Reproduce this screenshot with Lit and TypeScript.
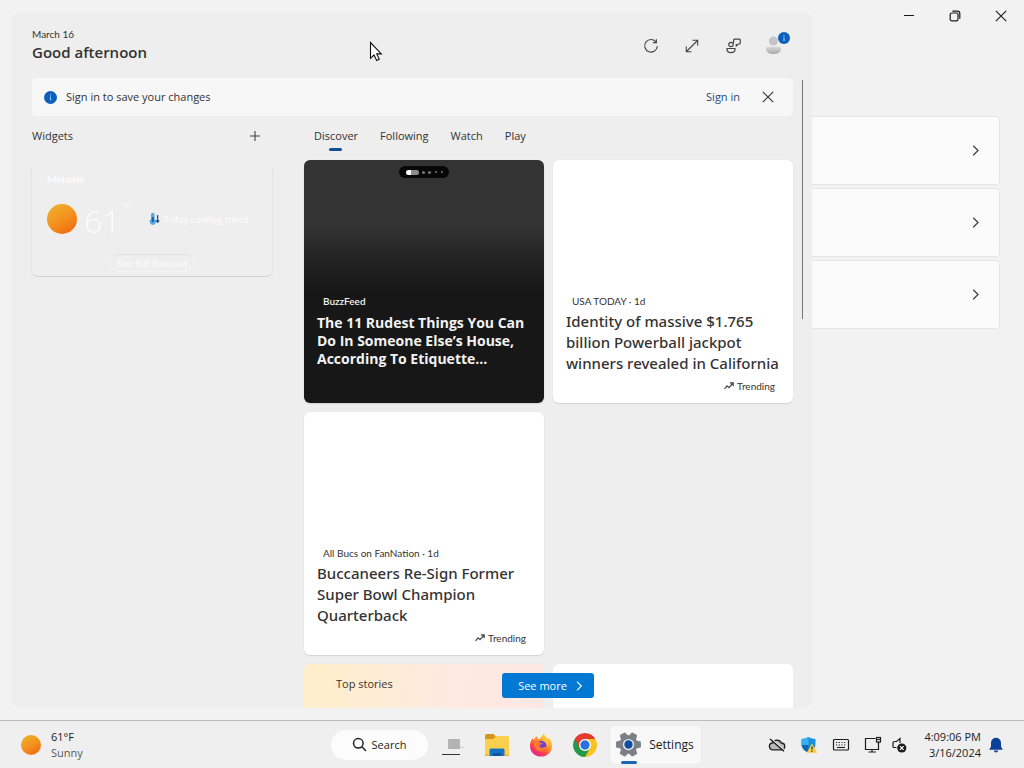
import { LitElement, html, css, svg, nothing } from "lit";
import { customElement, property } from "lit/decorators.js";

const base = css`
  * { box-sizing: border-box; margin: 0; }
  button, a { font: inherit; color: inherit; }
  button { border: 0; padding: 0; background: none; display: inline-flex; align-items: center; justify-content: center; }
  a { text-decoration: none; }
  svg { display: block; flex: none; }
  .small { font-family: Lato, "Open Sans", sans-serif; font-size: 10px; line-height: 16px; }
`;

const chevron = (size: number) => html`<svg width=${size} height=${size} viewBox="0 0 12 12" fill="none" stroke="currentColor" stroke-width="1.3"><path d="M3.5 0.8 8.8 6 3.5 11.2" /></svg>`;

const cross = (size: number) => html`<svg width=${size} height=${size} viewBox="0 0 12 12" fill="none" stroke="currentColor" stroke-width="1.1"><path d="M0.8 0.8 11.2 11.2M11.2 0.8 0.8 11.2" /></svg>`;

const sun = (size: number, id: string) => html`<svg width=${size} height=${size} viewBox="0 0 20 20">
  <defs><linearGradient id=${id} x1="0.2" y1="0" x2="0.8" y2="1"><stop offset="0" stop-color="#ecb02c" /><stop offset="0.5" stop-color="#f5921e" /><stop offset="1" stop-color="#ee6a10" /></linearGradient></defs>
  <circle cx="10" cy="10" r="10" fill="url(#${id})" /></svg>`;

const info = (size: number) => html`<svg width=${size} height=${size} viewBox="0 0 13 13"><circle cx="6.5" cy="6.5" r="6.5" fill="#0c5fbd" /><path d="M6.5 5.6V9.6M6.5 3.2V4.5" stroke="#9cc8f2" stroke-width="1.1" /></svg>`;

@customElement("settings-window")
class SettingsWindow extends LitElement {
  static styles = [base, css`
    :host { display: block; }
    .bar { display: flex; justify-content: flex-end; height: 32px; }
    .bar button { width: 46px; color: #1a1a1a; }
    .list { display: flex; flex-direction: column; gap: 3px; padding: 84px 24px 0 40px; }
    .row { height: 69px; border: 1px solid #e5e5e5; border-radius: 4px; background: #fbfbfb; justify-content: flex-end; padding-right: 18px; color: #3a3a3a; }
  `];
  render() {
    return html`
      <div class="bar">
        <button aria-label="Minimize"><svg width="12" height="12" viewBox="0 0 12 12"><path d="M1 5.5H11" stroke="currentColor" stroke-width="1" /></svg></button>
        <button aria-label="Restore"><svg width="12" height="12" viewBox="0 0 12 12" fill="none" stroke="currentColor" stroke-width="1.2"><rect x="1.2" y="3" width="7.8" height="7.8" rx="1.6" /><path d="M3.4 1.2H8.4Q10.8 1.2 10.8 3.6V8.8" /></svg></button>
        <button aria-label="Close">${cross(12)}</button>
      </div>
      <div class="list">
        ${["Open first setting", "Open second setting", "Open third setting"].map((l) => html`<button class="row" aria-label=${l}>${chevron(11)}</button>`)}
      </div>`;
  }
}

@customElement("weather-card")
class WeatherCard extends LitElement {
  static styles = [base, css`
    :host { display: block; color: #fcfcfc; }
    .card { height: 112px; padding: 6px 14px 4px 15px; border-radius: 6px; border-bottom: 1px solid #d2d2d2;
      box-shadow: 1px 0 0 #e4e4e4, -1px 0 0 #e4e4e4; display: flex; flex-direction: column; }
    .place { font-weight: 700; }
    .now { flex: 1; display: flex; align-items: center; padding-bottom: 4px; }
    .temp { font: 300 32px/40px "Open Sans", sans-serif; margin-left: 7px; padding-top: 4px; }
    .unit { font-size: 8px; line-height: 10px; align-self: flex-start; padding-top: 14px; margin: 0 19px 0 2px; }
    .trend { display: flex; align-items: center; gap: 3px; white-space: nowrap; }
    .more { align-self: center; height: 18px; padding: 0 6px; border-radius: 9px; border: 1px solid #f4f4f4; border-top-color: #e2e2e2; }
  `];
  render() {
    return html`<article class="card">
      <div class="place small">Metairie</div>
      <div class="now">
        ${sun(30, "sunCard")}
        <span class="temp">61</span><span class="unit">°F</span>
        <span class="trend small"><svg width="11" height="13" viewBox="0 0 11 13"><path d="M2 2.5a1.8 1.8 0 0 1 3.6 0V7.3a3 3 0 1 1-3.6 0Z" fill="#59a9e4" /><path d="M3.8 5V10" stroke="#185fae" stroke-width="2" /><path d="M8.6 3V10M7 8.3 8.6 10.3 10.2 8.3" stroke="#1f4f93" stroke-width="1.3" fill="none" /></svg>7-day cooling trend</span>
      </div>
      <button class="more small">See full forecast</button>
    </article>`;
  }
}

@customElement("news-card")
class NewsCard extends LitElement {
  @property() source = "";
  @property() headline = "";
  @property({ type: Boolean }) dark = false;
  @property({ type: Boolean }) trending = false;
  static styles = [base, css`
    :host { display: block; }
    .card { height: 100%; border-radius: 6px; background: #fff; color: #333; padding: 0 8px 9px 13px; display: flex; flex-direction: column;
      box-shadow: 0 1px 1px #d4d4d4, 0 0 1px #dcdcdc; position: relative; }
    .picture { height: 133px; flex: none; }
    .source { padding-left: 6px; margin-bottom: 2px; }
    .title { font-family: "Noto Sans", "Open Sans", sans-serif; font-size: 15px; line-height: 21px; font-weight: 500; }
    .tag { margin-top: auto; display: flex; justify-content: flex-end; align-items: center; gap: 3px; padding-right: 10px; }
    .dark { color: #f2f2f2; background: linear-gradient(#333 0, #333 28%, #262626 38%, #171717 54%, #171717 100%); }
    .dark .source { font-weight: 600; margin-bottom: 5px; }
    .dark .title { font-family: "Open Sans", sans-serif; font-size: 14px; line-height: 18px; font-weight: 700; }
    .dots { position: absolute; top: 6px; left: 50%; transform: translateX(-50%); width: 50px; height: 12px; border-radius: 6px; background: #070707;
      display: flex; align-items: center; justify-content: center; gap: 3px; }
    .dots i { width: 3px; height: 3px; border-radius: 2px; background: #777; }
    .dots i.far { width: 2px; height: 2px; margin-left: 1px; }
    .dots i.on { width: 13px; height: 5px; border-radius: 3px; background: linear-gradient(90deg, #fff 35%, #8c8c8c 35%); }
  `];
  render() {
    return html`<article class="card ${this.dark ? "dark" : ""}">
      ${this.dark ? html`<div class="dots"><i class="on"></i><i></i><i></i><i class="far"></i><i class="far"></i></div>` : nothing}
      <div class="picture"></div>
      <div class="source small">${this.source}</div>
      <h3 class="title">${this.headline}</h3>
      ${this.trending ? html`<div class="tag small"><svg width="10" height="10" viewBox="0 0 10 10" fill="none" stroke="#444" stroke-width="1.2"><path d="M0.5 8 3 4.8 5 6.6 9 2M5.8 1.8H9.2V5.2" /></svg>Trending</div>` : nothing}
    </article>`;
  }
}

@customElement("widgets-panel")
class WidgetsPanel extends LitElement {
  static styles = [base, css`
    :host { display: flex; flex-direction: column; background: #eeeeee; border-radius: 6px; overflow: hidden; color: #333; font-size: 11px; line-height: 16px; }
    header { display: flex; justify-content: space-between; padding: 14px 22px 12px 20px; flex: none; }
    h1 { font-size: 15px; line-height: 20px; font-weight: 600; }
    .tools { display: flex; gap: 9px; align-items: center; height: 40px; }
    .tools button { width: 32px; height: 32px; color: #444; }
    .body { flex: 1; min-height: 0; display: flex; }
    .content { flex: 1; min-width: 0; padding: 0 9px 0 20px; overflow: hidden; }
    .thumb { width: 1px; height: 239px; margin: 2px 9px 0 0; background: #757575; }
    .banner { display: flex; align-items: center; height: 38px; border-radius: 5px; background: #f7f7f7; padding: 0 17px 0 12px; }
    .banner p { flex: 1; margin-left: 9px; }
    .banner a { color: #1e4a7c; margin-right: 20px; }
    .banner button { width: 16px; height: 24px; }
    .columns { display: grid; grid-template-columns: 240px minmax(0, 1fr); gap: 32px; }
    .widgets-head { display: flex; justify-content: space-between; align-items: center; height: 40px; padding-right: 11px; margin-bottom: 9px; }
    h2 { font-size: 11px; font-weight: 400; }
    .tabs { display: flex; gap: 22px; height: 44px; padding-left: 10px; }
    .tabs button { position: relative; height: 40px; }
    .tabs button.active::after { content: ""; position: absolute; left: 50%; bottom: 5px; width: 13px; height: 3px; margin-left: -7px; border-radius: 2px; background: #0f5199; }
    .feed { display: grid; grid-template-columns: 1fr 1fr; grid-auto-rows: 243px; gap: 9px; }
    .feed .lead { grid-column: 1; }
    .top { grid-column: 1; border-radius: 6px; background: linear-gradient(100deg, #feefc9, #fdeadf 50%, #fde6e6); padding: 12px 32px; color: #3c3129; }
    .blank { border-radius: 6px; background: #fff; }
    .see { position: absolute; left: 50%; bottom: 10px; margin-left: 90px; width: 92px; height: 25px; border-radius: 3px; background: #0078d4; color: #fff; gap: 7px; padding-left: 6px; }
  `];
  render() {
    return html`
      <header>
        <div><div class="small">March 16</div><h1>Good afternoon</h1></div>
        <div class="tools">
          <button aria-label="Refresh"><svg width="16" height="16" viewBox="0 0 16 16" fill="none" stroke="currentColor" stroke-width="1.1"><path d="M13.3 4.4A6.3 6.3 0 1 0 14.3 8M13.4 1.2V4.6H10" /></svg></button>
          <button aria-label="Expand"><svg width="16" height="16" viewBox="0 0 16 16" fill="none" stroke="currentColor" stroke-width="1.1"><path d="M2.5 13.5 13.5 2.5M8.5 2.3H13.7V7.5M2.3 8.5V13.7H7.5" /></svg></button>
          <button aria-label="Feedback"><svg width="18" height="16" viewBox="0 0 18 16" fill="none" stroke="currentColor" stroke-width="1.2"><circle cx="7" cy="6.5" r="2.2" /><path d="M3 10.5H11V11.5Q11 14.6 7 14.6T3 11.5ZM9.6 5V2.2Q9.6 1.2 10.6 1.2H15.3Q16.3 1.2 16.3 2.2V5Q16.3 6 15.3 6H14.3L12.3 7.8V6" /></svg></button>
          <button aria-label="Account"><svg width="32" height="32" viewBox="0 0 32 32"><defs><linearGradient id="person" x1="0" y1="0" x2="0" y2="1"><stop offset="0" stop-color="#d9d9d9" /><stop offset="1" stop-color="#a9a9a9" /></linearGradient></defs><circle cx="15.5" cy="11" r="4.5" fill="#c4c6c6" /><path d="M8 18.5Q8 16.8 9.8 16.8H21.2Q23 16.8 23 18.5Q23 24 15.5 24T8 18.5Z" fill="url(#person)" /><circle cx="26" cy="8" r="6" fill="#0c5fbd" /><path d="M26 7.2V11M26 5V6.2" stroke="#9cc8f2" stroke-width="1.2" /></svg></button>
        </div>
      </header>
      <div class="body">
        <div class="content">
          <div class="banner">${info(13)}<p>Sign in to save your changes</p><a href="#signin">Sign in</a><button aria-label="Dismiss">${cross(12)}</button></div>
          <div class="columns">
            <section>
              <div class="widgets-head"><h2>Widgets</h2><button aria-label="Add widgets"><svg width="12" height="12" viewBox="0 0 12 12"><path d="M6 1V11M1 6H11" stroke="#444" stroke-width="1.1" /></svg></button></div>
              <weather-card></weather-card>
            </section>
            <section>
              <nav class="tabs"><button class="active">Discover</button><button>Following</button><button>Watch</button><button>Play</button></nav>
              <div class="feed">
                <news-card dark source="BuzzFeed" headline="The 11 Rudest Things You Can Do In Someone Else’s House, According To Etiquette..."></news-card>
                <news-card trending source="USA TODAY · 1d" headline="Identity of massive $1.765 billion Powerball jackpot winners revealed in California"></news-card>
                <news-card class="lead" trending source="All Bucs on FanNation · 1d" headline="Buccaneers Re-Sign Former Super Bowl Champion Quarterback"></news-card>
                <div class="top">Top stories</div>
                <div class="blank"></div>
              </div>
            </section>
          </div>
        </div>
        <div class="thumb"></div>
      </div>
      <button class="see">See more ${chevron(10)}</button>`;
  }
}

const gear = () => {
  const teeth = [0, 60, 120, 180, 240, 300];
  return html`<svg width="25" height="25" viewBox="0 0 24 24">${teeth.map((a) => svg`<path d="M8.6 4.5 9.6 0.6H14.4L15.4 4.5Z" fill="#7b8086" stroke="#7b8086" stroke-linejoin="round" transform="rotate(${a + 30} 12 12)" />`)}
    <circle cx="12" cy="12" r="8.8" fill="#7b8086" /><circle cx="12" cy="12" r="5.4" fill="#e4e9ee" /><circle cx="12" cy="12" r="4" fill="#0d4f9e" /></svg>`;
};

@customElement("task-bar")
class TaskBar extends LitElement {
  static styles = [base, css`
    :host { display: grid; grid-template-columns: 1fr auto 1fr; align-items: center; height: 48px; padding: 0 14px 0 21px; background: #efefef; border-top: 1px solid #bcbcbc; color: #1c1c1c; font-size: 11px; line-height: 16px; }
    .weather { display: inline-flex; align-items: center; gap: 10px; text-align: left; justify-self: start; }
    .weather small { font-size: 11px; color: #5a5a5a; display: block; }
    .apps { display: flex; align-items: center; }
    .apps button { width: 44px; height: 38px; }
    .apps .search { width: 97px; height: 30px; border-radius: 15px; background: #fcfcfc; gap: 5px; margin-right: 3px; font-size: 11px; }
    .apps .settings { width: 91px; border-radius: 4px; background: #f8f8f8; box-shadow: 0 0 1px #cfcfcf; gap: 8px; margin-left: 3px; position: relative; font-size: 12px; }
    .settings::after { content: ""; position: absolute; left: 11px; bottom: 0; width: 16px; height: 3px; border-radius: 2px; background: #1a66b8; }
    .tray { display: flex; align-items: center; justify-content: flex-end; }
    .tray button { width: 32px; height: 38px; }
    .tray .sound { width: 20px; }
    .tray .bell { width: 28px; }
    .tray .clock { width: 72px; justify-content: flex-end; text-align: right; margin-right: 1px; white-space: nowrap; }
  `];
  render() {
    return html`
      <button class="weather">${sun(20, "sunBar")}<span>61°F<small>Sunny</small></span></button>
      <div class="apps">
        <button class="search"><svg width="15" height="15" viewBox="0 0 15 15" fill="none" stroke="#222" stroke-width="1.5"><circle cx="6.3" cy="6.3" r="4.8" /><path d="M9.8 9.8 14 14" /></svg>Search</button>
        <button aria-label="Task view"><svg width="24" height="24" viewBox="0 0 24 24"><path d="M17 14.5H23" stroke="#d4d4d4" /><rect x="7" y="6" width="12" height="10" rx="1" fill="#b3b3b3" /><path d="M1 21.5H19" stroke="#333" /></svg></button>
        <button aria-label="File Explorer"><svg width="26" height="26" viewBox="0 0 26 26"><path d="M1 4Q1 2 3 2H9.5L12 4.5V7H1Z" fill="#d6961a" /><path d="M1 7H9.5L12 4H23.5Q25 4 25 5.5V22.5Q25 24 23.5 24H2.5Q1 24 1 22.5Z" fill="#fbd04d" /><path d="M5.500 24V18Q5.500 16.500 7 16.500H19Q20.500 16.500 20.500 18V24Z" fill="#1673c5" /><path d="M9 24V21H17V24Z" fill="#0f559f" /><path d="M1 23.3H5.5M20.5 23.3H25" stroke="#e2a72e" /></svg></button>
        <button aria-label="Firefox"><svg width="24" height="24" viewBox="0 0 24 24"><defs><linearGradient id="fox" x1="0.85" y1="0.1" x2="0.25" y2="0.95"><stop offset="0" stop-color="#ffe04a" /><stop offset="0.45" stop-color="#ff8b2a" /><stop offset="0.75" stop-color="#fb3d4f" /><stop offset="1" stop-color="#e2258f" /></linearGradient></defs><path d="M12 23.5C5.5 23.5 1 18.8 1 12.9C1 9.6 2.3 7 4 4.7C4 6 4.3 6.8 4.9 7.3C5.6 5.4 6.6 4 8 3C7.9 4.7 8.9 5.6 10 6.2C11.7 5.5 12.4 2.7 15 0.5C15.5 3 17.6 4.2 19.3 6.2C19.7 5.7 19.6 5 19.5 4.3C22 6.5 23 9.8 23 12.9C23 18.8 18.5 23.5 12 23.5Z" fill="url(#fox)" /><circle cx="12.3" cy="13" r="5.3" fill="#7440cf" /><path d="M4.9 9C7.5 7.5 9.5 8.3 10.8 9.8H13.3C12.8 11.6 10.7 11.5 10.2 12.7C10.3 14.6 13.8 16 17.5 13C17 17.5 13.5 19 10.5 18.3C6.5 17.4 4.5 13 4.9 9Z" fill="#ff7a2b" /><path d="M14 7.5C18 9 18.6 13 17.5 15.5C20.5 12 18.5 7 14 4.5Z" fill="#ffc638" /></svg></button>
        <button aria-label="Chrome"><svg width="24" height="24" viewBox="0 0 24 24"><circle cx="12" cy="12" r="12" fill="#fff" /><path d="M12 12 1.61 6A12 12 0 0 1 22.39 6Z" fill="#e33b2e" /><path d="M12 12 22.39 6A12 12 0 0 1 12 24Z" fill="#fcc31e" /><path d="M12 12 12 24A12 12 0 0 1 1.61 6Z" fill="#279847" /><path d="M12 6H22.39L17.2 15Z" fill="#fcc31e" /><path d="M17.2 15 12 24 6.8 15Z" fill="#279847" /><path d="M6.8 15 1.61 6 12 6Z" fill="#e33b2e" /><path d="M1.61 6 6.8 15 4 13Z" fill="#279847" /><circle cx="12" cy="12" r="6" fill="#fff" /><circle cx="12" cy="12" r="4.7" fill="#2c70de" /></svg></button>
        <button class="settings">${gear()}Settings</button>
      </div>
      <div class="tray">
        <button aria-label="OneDrive"><svg width="18" height="16" viewBox="0 0 18 16"><path d="M5 12.8A3.4 3.4 0 0 1 4.6 6A4.7 4.7 0 0 1 13.3 6A3.4 3.4 0 0 1 13.4 12.8Z" fill="#b9b9b9" stroke="#1c1c1c" stroke-width="1.3" /><path d="M2.8 1.2 16.8 13.5" stroke="#efefef" stroke-width="1.4" /><path d="M2 2 16 14.3" stroke="#1c1c1c" stroke-width="1.4" /></svg></button>
        <button aria-label="Windows Security"><svg width="18" height="18" viewBox="0 0 18 18"><path d="M8.5 1Q11.5 3 15.5 3V8Q15.5 14 8.5 16.5Q1.5 14 1.5 8V3Q5.5 3 8.5 1Z" fill="#1c8fdc" /><path d="M8.5 1V9H1.5V3Q5.5 3 8.5 1Z" fill="#37b0f1" /><path d="M8.5 9V16.5Q2.5 14.3 1.6 9Z" fill="#1266ad" /><path d="M12 7.5 17.3 16.8H6.7Z" fill="#fbcb45" /><path d="M12 10.5V13.6M12 14.5V15.7" stroke="#222" stroke-width="1.2" /></svg></button>
        <button aria-label="Touch keyboard"><svg width="18" height="14" viewBox="0 0 18 14"><rect x="1.5" y="1.5" width="15" height="10.5" rx="1" fill="none" stroke="#1c1c1c" stroke-width="1.2" /><path d="M4 4.5H14.5M4 7H14.5" stroke="#1c1c1c" stroke-width="1.2" stroke-dasharray="1.2 1.5" /><path d="M5 9.5H13" stroke="#1c1c1c" stroke-width="1.1" /></svg></button>
        <button aria-label="Network"><svg width="18" height="18" viewBox="0 0 18 18" fill="none" stroke="#1c1c1c" stroke-width="1.2"><path d="M11.5 2.5H1.5V13.5H14.5V7M8 13.5V16M4.5 16H12" /><rect x="12.5" y="1.5" width="4" height="4.5" /><path d="M12.5 3.5H16.5M14.5 6V8" /></svg></button>
        <button class="sound" aria-label="Volume"><svg width="16" height="16" viewBox="0 0 16 16"><path d="M9 6V1.5L5.5 4.5H4Q2 4.5 2 6.5V9.5Q2 10.5 3 10.5H5.5" fill="none" stroke="#1c1c1c" stroke-width="1.2" /><circle cx="10.8" cy="11" r="4.6" fill="#1c1c1c" /><path d="M9 9.2 12.6 12.8M12.6 9.2 9 12.8" stroke="#fff" stroke-width="1.2" /></svg></button>
        <button class="clock"><span>4:09:06 PM<br>3/16/2024</span></button>
        <button class="bell" aria-label="Notifications"><svg width="14" height="16" viewBox="0 0 14 16"><path d="M7 0.8A5 5 0 0 1 12 5.8V9.5L13.5 12V12.8H0.5V12L2 9.5V5.8A5 5 0 0 1 7 0.8ZM4.8 13.6H9.2Q8.8 15.5 7 15.5T4.8 13.6Z" fill="#0b4298" /></svg></button>
      </div>`;
  }
}

@customElement("app-root")
class AppRoot extends LitElement {
  static styles = [base, css`
    :host { display: flex; flex-direction: column; height: 100vh; overflow: hidden; background: #f2f2f2; font-family: "Open Sans", "Noto Sans", sans-serif; }
    .desktop { flex: 1; min-height: 0; position: relative; }
    .panel { position: absolute; top: 12px; bottom: 12px; left: 12px; width: min(800px, calc(100% - 24px)); }
    .pointer { position: absolute; left: 369px; top: 41px; }
  `];
  render() {
    return html`
      <main class="desktop">
        <settings-window></settings-window>
        <widgets-panel class="panel"></widgets-panel>
        <svg class="pointer" width="14" height="21" viewBox="0 0 14 21"><path d="M1.5 1.5V17.3L5 14L7.7 19.5L10.3 18.3L7.7 12.9H12.3Z" fill="#fff" stroke="#111" stroke-width="1.1" /></svg>
      </main>
      <task-bar></task-bar>`;
  }
}
